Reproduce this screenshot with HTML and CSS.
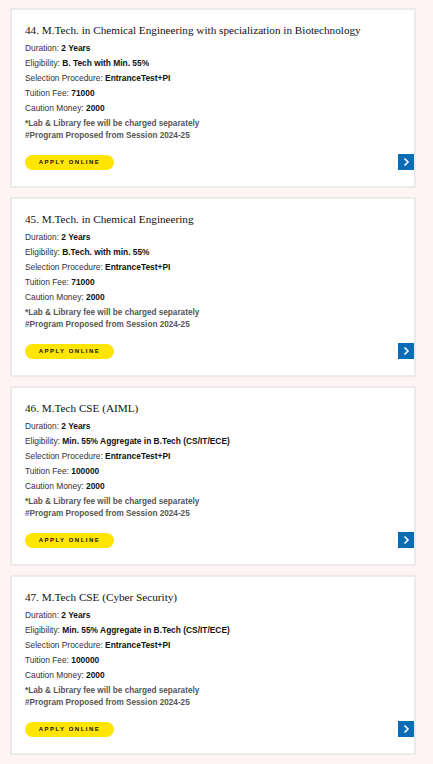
FILE: index.html
```html
<!DOCTYPE html>
<html>
<head>
<meta charset="utf-8">
<link rel="stylesheet" href="styles.css">
</head>
<body>
<div class="list">
  <div class="card">
    <h3 class="title">44. M.Tech. in Chemical Engineering with specialization in Biotechnology</h3>
    <p class="row">Duration: <b>2 Years</b></p>
    <p class="row">Eligibility: <b>B. Tech with Min. 55%</b></p>
    <p class="row">Selection Procedure: <b>EntranceTest+PI</b></p>
    <p class="row">Tuition Fee: <b>71000</b></p>
    <p class="row">Caution Money: <b>2000</b></p>
    <p class="note">*Lab &amp; Library fee will be charged separately<br>#Program Proposed from Session 2024-25</p>
    <div class="actions">
      <a class="apply">APPLY ONLINE</a>
      <a class="arrow"><svg viewBox="0 0 16 16" width="16" height="16"><path d="M6.5 4.5 L10 8 L6.5 11.5" fill="none" stroke="#fff" stroke-width="1.6"/></svg></a>
    </div>
  </div>
  <div class="card">
    <h3 class="title">45. M.Tech. in Chemical Engineering</h3>
    <p class="row">Duration: <b>2 Years</b></p>
    <p class="row">Eligibility: <b>B.Tech. with min. 55%</b></p>
    <p class="row">Selection Procedure: <b>EntranceTest+PI</b></p>
    <p class="row">Tuition Fee: <b>71000</b></p>
    <p class="row">Caution Money: <b>2000</b></p>
    <p class="note">*Lab &amp; Library fee will be charged separately<br>#Program Proposed from Session 2024-25</p>
    <div class="actions">
      <a class="apply">APPLY ONLINE</a>
      <a class="arrow"><svg viewBox="0 0 16 16" width="16" height="16"><path d="M6.5 4.5 L10 8 L6.5 11.5" fill="none" stroke="#fff" stroke-width="1.6"/></svg></a>
    </div>
  </div>
  <div class="card">
    <h3 class="title">46. M.Tech CSE (AIML)</h3>
    <p class="row">Duration: <b>2 Years</b></p>
    <p class="row">Eligibility: <b>Min. 55% Aggregate in B.Tech (CS/IT/ECE)</b></p>
    <p class="row">Selection Procedure: <b>EntranceTest+PI</b></p>
    <p class="row">Tuition Fee: <b>100000</b></p>
    <p class="row">Caution Money: <b>2000</b></p>
    <p class="note">*Lab &amp; Library fee will be charged separately<br>#Program Proposed from Session 2024-25</p>
    <div class="actions">
      <a class="apply">APPLY ONLINE</a>
      <a class="arrow"><svg viewBox="0 0 16 16" width="16" height="16"><path d="M6.5 4.5 L10 8 L6.5 11.5" fill="none" stroke="#fff" stroke-width="1.6"/></svg></a>
    </div>
  </div>
  <div class="card">
    <h3 class="title">47. M.Tech CSE (Cyber Security)</h3>
    <p class="row">Duration: <b>2 Years</b></p>
    <p class="row">Eligibility: <b>Min. 55% Aggregate in B.Tech (CS/IT/ECE)</b></p>
    <p class="row">Selection Procedure: <b>EntranceTest+PI</b></p>
    <p class="row">Tuition Fee: <b>100000</b></p>
    <p class="row">Caution Money: <b>2000</b></p>
    <p class="note">*Lab &amp; Library fee will be charged separately<br>#Program Proposed from Session 2024-25</p>
    <div class="actions">
      <a class="apply">APPLY ONLINE</a>
      <a class="arrow"><svg viewBox="0 0 16 16" width="16" height="16"><path d="M6.5 4.5 L10 8 L6.5 11.5" fill="none" stroke="#fff" stroke-width="1.6"/></svg></a>
    </div>
  </div>
</div>
</body>
</html>
```
FILE: styles.css
```css
html, body {
  margin: 0;
  padding: 0;
  background: #fff4f4;
}
body {
  font-family: "Liberation Sans", Arial, sans-serif;
  color: #222;
}
.list {
  display: flex;
  flex-direction: column;
  gap: 9px;
  padding: 8px 17px 10px 10px;
}
.card {
  background: #fff;
  border: 2px solid #ebebeb;
  padding: 11px 0 16px 13px;
}
.title {
  font-family: "Liberation Serif", "Times New Roman", serif;
  font-weight: normal;
  font-size: 11.2px;
  line-height: 18px;
  color: #111;
  margin: 0 0 2px 0;
}
.row {
  margin: 0;
  font-size: 8.4px;
  line-height: 15px;
  color: #333;
}
.row b {
  color: #111;
}
.note {
  margin: 2px 0 0 0;
  font-size: 8.2px;
  line-height: 12px;
  font-weight: bold;
  color: #555;
}
.actions {
  display: flex;
  justify-content: space-between;
  align-items: center;
  margin-top: 12px;
}
.apply {
  display: flex;
  align-items: center;
  justify-content: center;
  width: 89px;
  height: 15px;
  border-radius: 8px;
  background: #ffe500;
  color: #111;
  font-size: 6px;
  font-weight: bold;
  letter-spacing: 1.5px;
}
.arrow {
  display: block;
  width: 16px;
  height: 16px;
  background: #0a6db3;
}
.arrow svg {
  display: block;
}
```
